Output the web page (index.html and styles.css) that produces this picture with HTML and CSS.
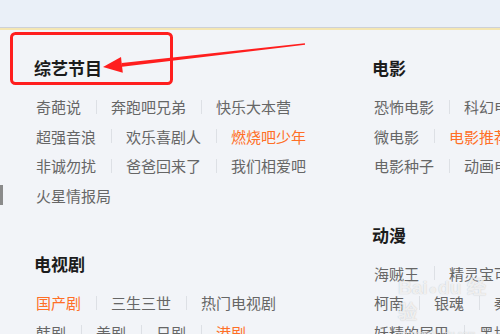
FILE: index.html
```html
<!DOCTYPE html>
<html lang="zh-CN">
<head>
  <meta charset="UTF-8" />
  <meta name="viewport" content="width=device-width, initial-scale=1.0"/>
  <title>分类导航</title>
  <link rel="stylesheet" href="styles.css">
</head>
<body>
  <div class="topbar"></div>
  <div class="topline"></div>

  <div class="page">
    <div class="col">
      <section class="group">
        <h2>综艺节目</h2>
        <div class="row"><a>奇葩说</a><a>奔跑吧兄弟</a><a>快乐大本营</a></div>
        <div class="row"><a>超强音浪</a><a>欢乐喜剧人</a><a class="hot">燃烧吧少年</a></div>
        <div class="row"><a>非诚勿扰</a><a>爸爸回来了</a><a>我们相爱吧</a></div>
        <div class="row"><a>火星情报局</a></div>
      </section>
      <section class="group">
        <h2>电视剧</h2>
        <div class="row"><a class="hot">国产剧</a><a>三生三世</a><a>热门电视剧</a></div>
        <div class="row"><a>韩剧</a><a>美剧</a><a>日剧</a><a class="hot">港剧</a></div>
      </section>
    </div>

    <div class="col">
      <section class="group">
        <h2>电影</h2>
        <div class="row"><a>恐怖电影</a><a>科幻电影</a></div>
        <div class="row"><a>微电影</a><a class="hot">电影推荐</a></div>
        <div class="row"><a>电影种子</a><a>动画电影</a></div>
      </section>
      <section class="group">
        <h2>动漫</h2>
        <div class="row"><a>海贼王</a><a>精灵宝可梦</a></div>
        <div class="row"><a>柯南</a><a>银魂</a><a>秦时明月</a></div>
        <div class="row"><a>妖精的尾巴</a><a>黑执事</a></div>
      </section>
    </div>
  </div>

  <!-- left edge tab -->
  <div class="edge-tab"></div>

  <!-- annotation drawn over the screenshot -->
  <svg class="markup" width="500" height="334" viewBox="0 0 500 334">
    <rect x="11.5" y="33.5" width="160" height="50" rx="4" fill="none" stroke="#ff1e1e" stroke-width="3"/>
    <polygon points="122.1,66.8 121.7,62.9 304.9,43.3 305.1,44.7" fill="#ff1e1e"/>
    <polygon points="103,67 121,56.9 122.8,72.8" fill="#ff1e1e"/>
  </svg>

  <div class="watermark">
    <div class="wm-logo">Bai<span class="paw">●</span>du 经验</div>
    <div class="wm-url">jingyan.baidu.com</div>
  </div>
</body>
</html>
```

FILE: styles.css
```css
html, body {
  margin: 0;
  padding: 0;
  height: 100%;
  overflow: hidden;
  background: #f2f4f8;
  font-family: "Noto Sans CJK SC", "Noto Sans", sans-serif;
}

.topbar {
  height: 27px;
  background: #eaf0f8;
  border-bottom: 1px solid #cdd1d8;
}

.topline {
  height: 2px;
  background: #f3e6b4;
}

.page {
  display: grid;
  grid-template-columns: 338px 1fr;
  padding: 26px 0 0 34px;
  white-space: nowrap;
}

.col {
  overflow: hidden;
}

.group {
  margin-bottom: 42px;
}

.group h2 {
  margin: 0 0 12px;
  font-size: 17px;
  line-height: 24px;
  font-weight: bold;
  color: #1c1c1c;
}

.row {
  display: flex;
  align-items: center;
  height: 29.5px;
  padding-left: 2px;
}

.row a {
  font-size: 15px;
  color: #666;
  text-decoration: none;
  display: flex;
  align-items: center;
}

.row a.hot {
  color: #ff6f26;
}

/* thin divider between links */
.row a + a::before {
  content: "";
  display: block;
  width: 1px;
  height: 14px;
  background: #dde0e5;
  margin: 0 14px 0 15px;
}

.edge-tab {
  position: absolute;
  left: 0;
  top: 185px;
  width: 3px;
  height: 20px;
  background: #8b8b8b;
}

.markup {
  position: absolute;
  top: 0;
  left: 0;
  pointer-events: none;
}

.watermark {
  position: absolute;
  left: 398px;
  top: 276px;
  color: rgba(255, 255, 255, 0.75);
  text-shadow: 0 0 1px rgba(120, 120, 120, 0.45);
  font-family: "Liberation Sans", sans-serif;
  pointer-events: none;
}

.wm-logo {
  font-size: 19px;
  font-weight: bold;
  line-height: 24px;
}

.wm-logo .paw {
  font-size: 14px;
  margin: 0 1px;
}

.wm-url {
  font-size: 9px;
  line-height: 12px;
  margin-top: 3px;
  letter-spacing: 0.3px;
}
```
